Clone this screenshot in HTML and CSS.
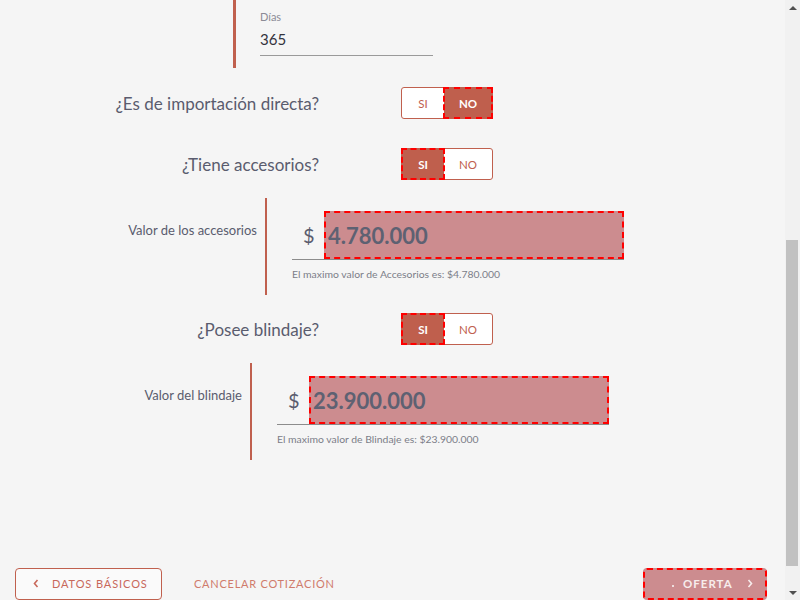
FILE: index.html
```html
<!DOCTYPE html>
<html lang="es">
<head>
<meta charset="utf-8">
<title>Cotización</title>
<link rel="stylesheet" href="styles.css">
</head>
<body>
<div class="app">
  <main class="page">
    <section class="dias">
      <div class="field-label">Días</div>
      <div class="field-value">365</div>
    </section>

    <div class="question q-first">
      <span class="q-label">¿Es de importación directa?</span>
      <div class="toggle">
        <span class="opt opt-si">SI</span>
        <span class="opt opt-no active">NO</span>
      </div>
    </div>

    <div class="question q-second">
      <span class="q-label">¿Tiene accesorios?</span>
      <div class="toggle">
        <span class="opt opt-si active">SI</span>
        <span class="opt opt-no">NO</span>
      </div>
    </div>

    <div class="amount">
      <div class="amount-label">Valor de los accesorios</div>
      <div class="amount-body">
        <div class="amount-input">
          <span class="currency">$</span>
          <div class="amount-box">4.780.000</div>
        </div>
        <div class="hint">El maximo valor de Accesorios es: $4.780.000</div>
      </div>
    </div>

    <div class="question q-third">
      <span class="q-label">¿Posee blindaje?</span>
      <div class="toggle">
        <span class="opt opt-si active">SI</span>
        <span class="opt opt-no">NO</span>
      </div>
    </div>

    <div class="amount amount-shift">
      <div class="amount-label">Valor del blindaje</div>
      <div class="amount-body">
        <div class="amount-input">
          <span class="currency">$</span>
          <div class="amount-box">23.900.000</div>
        </div>
        <div class="hint">El maximo valor de Blindaje es: $23.900.000</div>
      </div>
    </div>

    <footer class="actions">
      <button class="btn-outline">
        <svg class="chev" width="6" height="9" viewBox="0 0 6 9"><polyline points="4.5,1 1.5,4.5 4.5,8" fill="none" stroke="currentColor" stroke-width="1.6"/></svg>
        <span>DATOS BÁSICOS</span>
      </button>
      <span class="link">CANCELAR COTIZACIÓN</span>
      <button class="btn-primary">
        <span class="dot"></span>
        <span>OFERTA</span>
        <svg class="chev-r" width="6" height="9" viewBox="0 0 6 9"><polyline points="1.5,1 4.5,4.5 1.5,8" fill="none" stroke="currentColor" stroke-width="1.6"/></svg>
      </button>
    </footer>
  </main>

  <div class="scrollbar">
    <div class="sb-btn"><span class="arrow-up"></span></div>
    <div class="sb-track"><div class="sb-thumb"></div></div>
    <div class="sb-btn"><span class="arrow-down"></span></div>
  </div>
</div>
</body>
</html>
```

FILE: styles.css
```css
* { box-sizing: border-box; }

html, body {
  margin: 0;
  padding: 0;
}

body {
  font-family: "Lato", "Liberation Sans", sans-serif;
  background: #f5f5f5;
  color: #5a5c6e;
}

.app {
  display: flex;
  height: 600px;
  overflow: hidden;
}

.page {
  flex: 1;
  display: flex;
  flex-direction: column;
}

/* Días field */
.dias {
  margin-left: 233px;
  border-left: 3px solid #c0604e;
  height: 68px;
  padding-left: 24px;
}

.field-label {
  padding-top: 10px;
  font-size: 11px;
  line-height: 14px;
  color: #8b8b96;
}

.field-value {
  margin-top: 5px;
  width: 173px;
  font-size: 15px;
  line-height: 20px;
  padding-bottom: 6px;
  color: #33333d;
  border-bottom: 1px solid #9a9a9a;
}

/* Yes / no questions */
.question {
  display: flex;
  align-items: center;
  height: 32px;
  margin-top: 18px;
}

.q-first { margin-top: 19px; }
.q-second { margin-top: 29px; }

.q-label {
  width: 319px;
  text-align: right;
  font-size: 17px;
  color: #5a5c6e;
}

.toggle {
  margin-left: 82px;
  display: flex;
  width: 92px;
  height: 32px;
  border: 1px solid #c0604e;
  border-radius: 3px;
  background: #fff;
}

.opt {
  display: flex;
  align-items: center;
  justify-content: center;
  font-size: 11.5px;
  color: #c0604e;
}

.opt-si { width: 42px; }
.opt-no { width: 48px; }

.opt.active {
  background: #bf5f4d;
  color: #fff;
  font-weight: 700;
  outline: 2px dashed #ff0000;
  outline-offset: -1px;
}

/* Amount fields */
.amount {
  display: flex;
  height: 97px;
  margin-top: 18px;
}

.amount-label {
  width: 257px;
  text-align: right;
  padding-top: 24px;
  font-size: 13px;
  line-height: 16px;
  color: #5a5c6e;
}

.amount-shift .amount-label { width: 242px; }

.amount-body {
  margin-left: 8px;
  border-left: 2px solid #c0604e;
  padding-left: 25px;
  padding-top: 13px;
}

.amount-input {
  display: flex;
  width: 332px;
  height: 49px;
  border-bottom: 1px solid #8c8c8c;
}

.currency {
  width: 32px;
  padding-left: 11px;
  display: flex;
  align-items: center;
  font-size: 20px;
  color: #5a5c6e;
}

.amount-box {
  flex: 1;
  display: flex;
  align-items: center;
  padding-left: 4px;
  background: #cc8c8f;
  outline: 2px dashed #ff0000;
  outline-offset: -2px;
  font-size: 22px;
  font-weight: 700;
  color: #5e6172;
}

.hint {
  margin-top: 7px;
  font-size: 10.4px;
  line-height: 14px;
  color: #7b7d88;
}

/* Footer actions */
.actions {
  margin-top: auto;
  display: flex;
  align-items: center;
  height: 32px;
  padding: 0 18px 0 15px;
}

.btn-outline {
  display: flex;
  align-items: center;
  width: 147px;
  height: 32px;
  padding: 0 0 1px 17px;
  border: 1px solid #c0604e;
  border-radius: 4px;
  background: #fafafa;
  color: #c8685a;
  font-family: inherit;
  font-size: 11px;
  letter-spacing: 0.9px;
  white-space: nowrap;
}

.btn-outline .chev { margin-right: 13px; }

.link {
  margin-left: 32px;
  margin-bottom: 1px;
  font-size: 11px;
  letter-spacing: 0.75px;
  color: #d07b6c;
  white-space: nowrap;
}

.btn-primary {
  margin-left: auto;
  display: flex;
  align-items: center;
  width: 124px;
  height: 32px;
  padding: 0 0 1px 29px;
  border: none;
  border-radius: 4px;
  background: #cc8c8f;
  outline: 2px dashed #ff0000;
  outline-offset: -2px;
  color: #f7ecec;
  font-family: inherit;
  font-size: 11.5px;
  font-weight: 700;
  letter-spacing: 1px;
  white-space: nowrap;
}

.btn-primary .dot {
  width: 2px;
  height: 2px;
  background: #eedede;
  margin-right: 9px;
  margin-top: 5px;
}

.btn-primary .chev-r { margin-left: 14px; }

/* Scrollbar */
.scrollbar {
  width: 15px;
  display: flex;
  flex-direction: column;
  background: #f1f1f1;
}

.sb-btn {
  height: 15px;
  display: flex;
  align-items: center;
  justify-content: center;
}

.arrow-up {
  width: 0;
  height: 0;
  border-left: 4px solid transparent;
  border-right: 4px solid transparent;
  border-bottom: 4px solid #505050;
}

.arrow-down {
  width: 0;
  height: 0;
  border-left: 4px solid transparent;
  border-right: 4px solid transparent;
  border-top: 4px solid #505050;
}

.sb-track {
  flex: 1;
}

.sb-thumb {
  margin: 225px 2px 0 1px;
  height: 326px;
  background: #c1c1c1;
}
```
